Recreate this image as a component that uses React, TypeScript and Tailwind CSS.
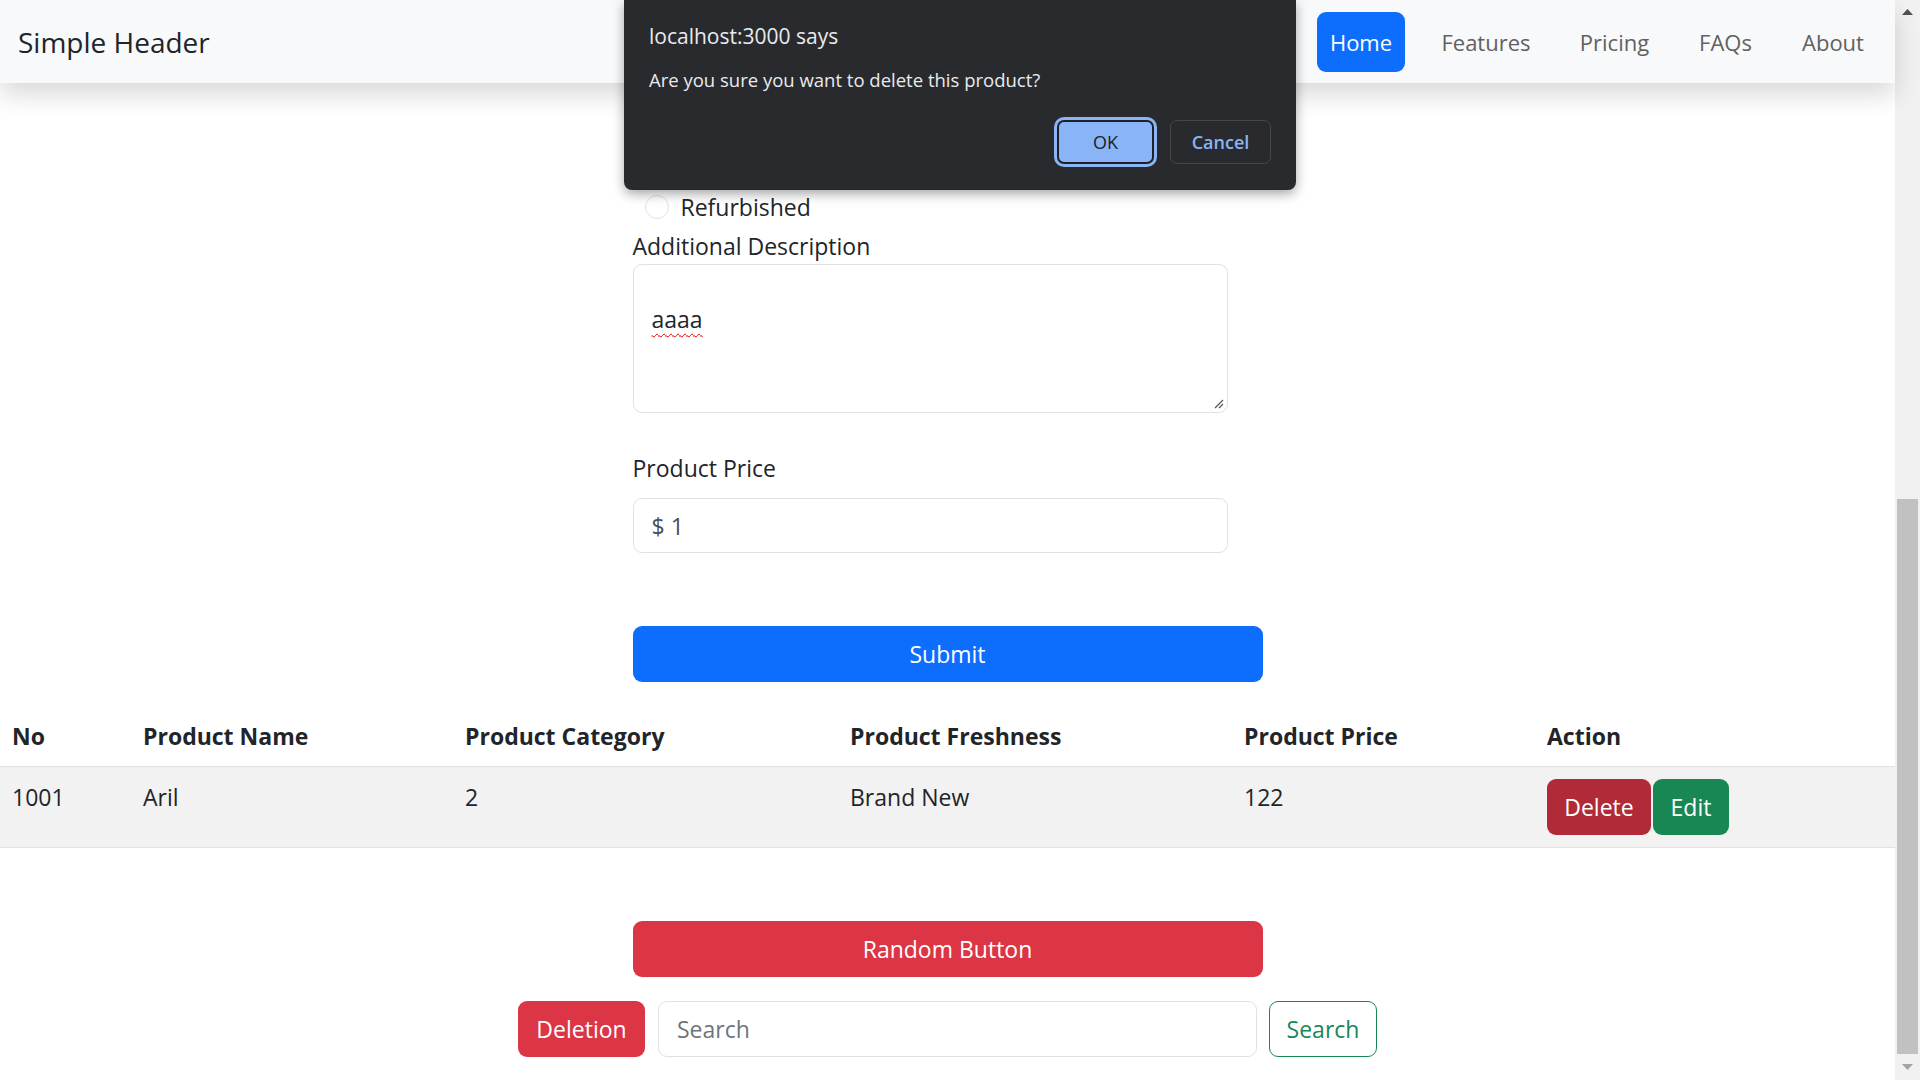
import React from "react";

const navLinks = [
  { label: "Features", w: "w-[112px]" },
  { label: "Pricing", w: "w-[95px]" },
  { label: "FAQs", w: "w-[77px]" },
  { label: "About", w: "w-[88px]" },
];

const App = () => {
  return (
    <div className="relative flex h-screen w-full overflow-hidden bg-white text-[#212529] font-['Open_Sans','Liberation_Sans',sans-serif]">
      {/* page */}
      <div className="flex min-w-0 flex-1 flex-col">
        <header className="relative z-10 flex h-[83px] shrink-0 items-center justify-between bg-[#f8f9fa] pl-[18px] pr-[18px] shadow-[0_12px_24px_rgba(0,0,0,0.15)]">
          <span className="text-[28px] leading-[40px] text-[#212529]">Simple Header</span>
          <nav className="flex items-center gap-[25px]">
            <a className="flex h-[60px] w-[88px] items-center justify-center rounded-[9px] bg-[#0d6efd] text-[22px] leading-[36px] text-white">
              Home
            </a>
            {navLinks.map((l) => (
              <a key={l.label} className={`flex h-[60px] items-center justify-center text-[22px] leading-[36px] text-[#616161] ${l.w}`}>
                {l.label}
              </a>
            ))}
          </nav>
        </header>

        <main className="flex flex-col text-[23px] leading-[36px]">
          <div className="mx-auto flex w-[630px] flex-col pt-[106px]">
            <div className="ml-3 flex h-[36px] items-start">
              <span className="mt-[6px] h-6 w-6 rounded-full border border-[#dee2e6] bg-white" />
              <span className="ml-3">Refurbished</span>
            </div>

            <label className="mt-[3px]">Additional Description</label>
            <div className="relative h-[149px] w-[595px] rounded-[9px] border border-[#dee2e6] px-[18px] pt-[36px]">
              <span className="underline decoration-[#e00000] decoration-wavy decoration-1 underline-offset-[5px]">aaaa</span>
              <svg className="absolute bottom-[3px] right-[3px]" width="12" height="12" viewBox="0 0 12 12">
                <path d="M11 3 L3 11 M11 7 L7 11" stroke="#555" strokeWidth="1.2" />
              </svg>
            </div>

            <label className="mt-[37px] mb-3">Product Price</label>
            <div className="flex h-[55px] w-[595px] items-center rounded-[9px] border border-[#dee2e6] px-[18px] text-[#4b4f54]">
              $ 1
            </div>

            <button className="mt-[73px] h-[56px] w-full rounded-[9px] bg-[#0d6efd] text-white">Submit</button>
          </div>

          <table className="mt-[24px] w-full table-fixed border-collapse text-left">
            <colgroup>
              <col className="w-[131px]" />
              <col className="w-[322px]" />
              <col className="w-[385px]" />
              <col className="w-[394px]" />
              <col className="w-[303px]" />
              <col />
            </colgroup>
            <thead>
              <tr className="border-b border-[#dee2e6]">
                <th className="px-3 py-3 align-top font-bold">No</th>
                <th className="px-3 py-3 align-top font-bold">Product Name</th>
                <th className="px-3 py-3 align-top font-bold">Product Category</th>
                <th className="px-3 py-3 align-top font-bold">Product Freshness</th>
                <th className="px-3 py-3 align-top font-bold">Product Price</th>
                <th className="px-3 py-3 align-top font-bold">Action</th>
              </tr>
            </thead>
            <tbody>
              <tr className="border-b border-[#dee2e6] bg-[#f2f2f2]">
                <td className="px-3 py-3 align-top">1001</td>
                <td className="px-3 py-3 align-top">Aril</td>
                <td className="px-3 py-3 align-top">2</td>
                <td className="px-3 py-3 align-top">Brand New</td>
                <td className="px-3 py-3 align-top">122</td>
                <td className="px-3 py-3 align-top">
                  <div className="flex gap-[2px]">
                    <button className="flex h-[56px] w-[104px] items-center justify-center rounded-[9px] bg-[#b02a37] text-white">
                      Delete
                    </button>
                    <button className="flex h-[56px] w-[76px] items-center justify-center rounded-[9px] bg-[#198754] text-white">
                      Edit
                    </button>
                  </div>
                </td>
              </tr>
            </tbody>
          </table>

          <div className="mx-auto mt-[73px] w-[630px]">
            <button className="h-[56px] w-full rounded-[9px] bg-[#dc3545] text-white">Random Button</button>
          </div>

          <div className="mt-[24px] flex items-center justify-center">
            <button className="h-[56px] w-[127px] rounded-[9px] bg-[#dc3545] text-white">Deletion</button>
            <div className="ml-[13px] flex h-[56px] w-[599px] items-center rounded-[9px] border border-[#dee2e6] px-[18px] text-[#6c757d]">
              Search
            </div>
            <button className="ml-[12px] h-[56px] w-[108px] rounded-[9px] border border-[#198754] text-[#198754]">
              Search
            </button>
          </div>
        </main>
      </div>

      {/* scrollbar */}
      <div className="flex w-[25px] shrink-0 flex-col items-center bg-[#f1f1f1]">
        <div className="flex h-[24px] w-full items-center justify-center">
          <svg width="11" height="6" viewBox="0 0 11 6">
            <path d="M0 6 L5.5 0 L11 6 Z" fill="#505050" />
          </svg>
        </div>
        <div className="mt-[475px] h-[555px] w-[21px] bg-[#c1c1c1]" />
        <div className="flex h-[26px] w-full items-center justify-center">
          <svg width="11" height="6" viewBox="0 0 11 6">
            <path d="M0 0 L5.5 6 L11 0 Z" fill="#a3a3a3" />
          </svg>
        </div>
      </div>

      {/* browser confirm dialog */}
      <div className="absolute left-[624px] top-0 z-20 flex h-[190px] w-[672px] flex-col rounded-b-[8px] bg-[#292a2d] px-[25px] pt-[22px] shadow-[0_4px_12px_rgba(0,0,0,0.35)]">
        <div className="text-[21px] leading-[28px] text-[#e8eaed]">localhost:3000 says</div>
        <div className="mt-[18px] text-[18.5px] leading-[24px] text-[#e8eaed]">Are you sure you want to delete this product?</div>
        <div className="mt-[28px] flex justify-end gap-4">
          <button className="h-[44px] w-[97px] rounded-[7px] border-2 border-[#202124] bg-[#8ab4f8] text-[18px] font-medium text-[#202124] ring-[3px] ring-[#8ab4f8]">
            OK
          </button>
          <button className="h-[44px] w-[101px] rounded-[7px] border border-[#45474a] text-[18px] font-semibold text-[#8ab4f8]">
            Cancel
          </button>
        </div>
      </div>
    </div>
  );
};

export default App;
